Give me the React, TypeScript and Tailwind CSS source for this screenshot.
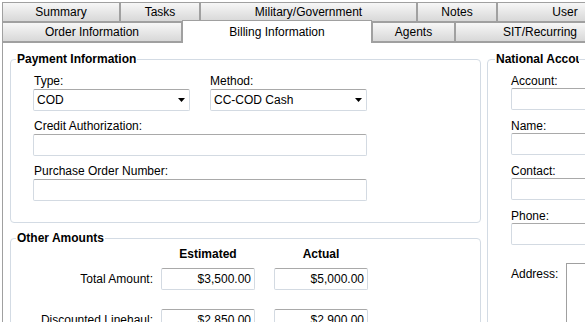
import React from 'react';

const TAB =
  'flex items-center justify-center h-[20px] border border-[#a0a0a0] bg-linear-to-b from-[#f7f7f7] to-[#d8d8d8] whitespace-nowrap overflow-hidden';

const FIELDSET = 'border border-[#d3dbe4] rounded-[4px] p-0 m-0';
const LEGEND = 'ml-[5px] px-[1px] font-bold leading-[14px]';
const INPUT = 'h-[22px] border border-[#d3dae2] border-t-[#a9a9a9] rounded-[2px] bg-white';

const topTabs = [
  { label: 'Summary', w: 'w-[118px]' },
  { label: 'Tasks', w: 'w-[80px]' },
  { label: 'Military/Government', w: 'w-[217px]' },
  { label: 'Notes', w: 'w-[80px]' },
  { label: 'User', w: 'w-[136px]' },
];

const Arrow = () => (
  <svg width="7" height="4" viewBox="0 0 7 4">
    <path d="M0 0h7L3.5 4z" fill="#000" />
  </svg>
);

const Select = ({ value }: { value: string }) => (
  <div className={`${INPUT} w-[157px] flex items-center justify-between pl-[3px] pr-[4px]`}>
    <span>{value}</span>
    <Arrow />
  </div>
);

const Field = ({ label, className = '' }: { label: string; className?: string }) => (
  <div className={className}>
    <div className="leading-[14px] pl-[1px] mb-[1px]">{label}</div>
    <div className={`${INPUT} w-[334px]`} />
  </div>
);

const Amount = ({ value }: { value: string }) => (
  <div className={`${INPUT} w-[94px] shrink-0 flex items-center justify-end pr-[3px]`}>{value}</div>
);

const AmountRow = ({ label, est, act, className = '' }: { label: string; est: string; act: string; className?: string }) => (
  <div className={`flex items-center ${className}`}>
    <div className="w-[142px] shrink-0 text-right whitespace-nowrap mr-[8px]">{label}</div>
    <Amount value={est} />
    <div className="w-[19px] shrink-0" />
    <Amount value={act} />
  </div>
);

const SideField = ({ label, className = '' }: { label: string; className?: string }) => (
  <div className={className}>
    <div className="leading-[14px]">{label}</div>
    <div className={`${INPUT} w-[110px]`} />
  </div>
);

export default function App() {
  return (
    <div className="w-[585px] h-[322px] overflow-hidden bg-white pt-[2px] pl-[2px] text-[12px] text-black font-['Liberation_Sans',Arial,sans-serif]">
      {/* Tab rows */}
      <div className="flex">
        {topTabs.map((t) => (
          <div key={t.label} className={`${TAB} ${t.w} shrink-0`}>
            {t.label}
          </div>
        ))}
      </div>
      <div className="flex h-[20px]">
        <div className={`${TAB} w-[180px] shrink-0`}>Order Information</div>
        <div className="relative z-10 -mt-[2px] h-[23px] w-[190px] shrink-0 flex items-center justify-center bg-white border border-b-0 border-[#a0a0a0]">
          Billing Information
        </div>
        <div className={`${TAB} w-[83px] shrink-0`}>Agents</div>
        <div className={`${TAB} w-[170px] shrink-0`}>SIT/Recurring</div>
      </div>

      {/* Panel */}
      <div className="flex border-l border-t border-[#a0a0a0] pl-[7px] w-[700px] h-[300px]">
        <div className="w-[471px] shrink-0">
          <fieldset className={`${FIELDSET} mt-[9px]`}>
            <legend className={LEGEND}>Payment Information</legend>
            <div className="pl-[22px] pt-[8px] pb-[21px]">
              <div className="flex gap-[20px]">
                <div>
                  <div className="leading-[14px] pl-[1px] mb-[1px]">Type:</div>
                  <Select value="COD" />
                </div>
                <div>
                  <div className="leading-[14px] mb-[1px]">Method:</div>
                  <Select value="CC-COD Cash" />
                </div>
              </div>
              <Field label="Credit Authorization:" className="mt-[8px]" />
              <Field label="Purchase Order Number:" className="mt-[8px]" />
            </div>
          </fieldset>

          <fieldset className={`${FIELDSET} mt-[8px]`}>
            <legend className={LEGEND}>Other Amounts</legend>
            <div className="pt-[2px] pb-[20px]">
              <div className="flex leading-[14px] font-bold">
                <div className="w-[150px] shrink-0" />
                <div className="w-[94px] shrink-0 text-center">Estimated</div>
                <div className="w-[19px] shrink-0" />
                <div className="w-[94px] shrink-0 text-center">Actual</div>
              </div>
              <AmountRow label="Total Amount:" est="$3,500.00" act="$5,000.00" className="mt-[7px]" />
              <AmountRow label="Discounted Linehaul:" est="$2,850.00" act="$2,900.00" className="mt-[19px]" />
            </div>
          </fieldset>
        </div>

        <fieldset className={`${FIELDSET} ml-[6px] mt-[9px] w-[150px] shrink-0 self-start`}>
          <legend className="ml-[7px] px-[1px] font-bold leading-[14px] w-[84px] overflow-hidden whitespace-nowrap">
            National Account
          </legend>
          <div className="pl-[23px] pt-[8px] pb-[20px]">
            <SideField label="Account:" />
            <SideField label="Name:" className="mt-[9px]" />
            <SideField label="Contact:" className="mt-[9px]" />
            <SideField label="Phone:" className="mt-[9px]" />
            <div className="flex mt-[18px]">
              <div className="w-[55px] shrink-0 mt-[4px] leading-[14px]">Address:</div>
              <div className="w-[60px] h-[70px] border border-[#a0a0a0] bg-white" />
            </div>
          </div>
        </fieldset>
      </div>
    </div>
  );
}
